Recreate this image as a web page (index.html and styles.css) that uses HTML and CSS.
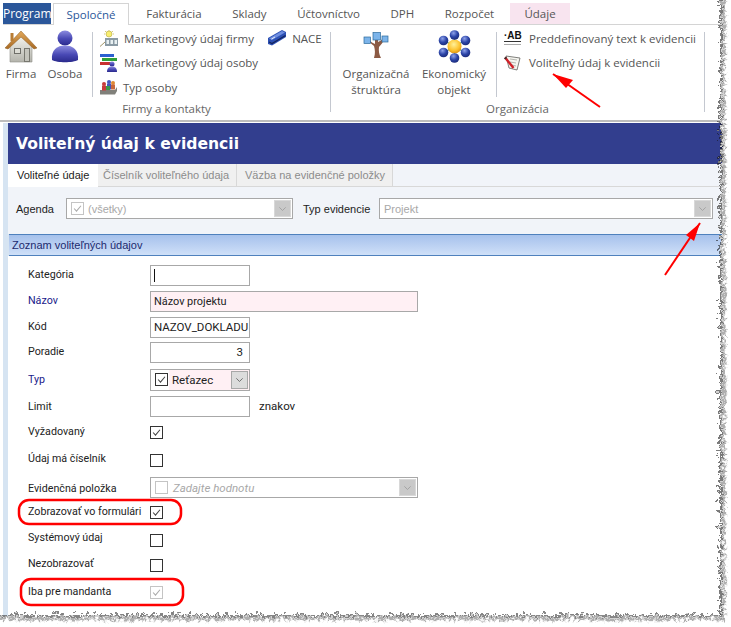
FILE: index.html
```html
<!DOCTYPE html>
<html lang="sk">
<head>
<meta charset="utf-8">
<title>Voliteľný údaj k evidencii</title>
<link rel="stylesheet" href="styles.css">
</head>
<body>
<svg class="defs" width="0" height="0" aria-hidden="true">
  <defs>
    <symbol id="tick" viewBox="0 0 13 13"><path d="M2.5 6.5 5.3 9.6 10.6 3.2" fill="none" stroke="currentColor" stroke-width="1.2"/></symbol>
    <symbol id="chev" viewBox="0 0 17 19"><path d="M4.5 8 8.5 12 12.5 8" fill="none" stroke="currentColor" stroke-width="1"/></symbol>
    <radialGradient id="sph" cx=".4" cy=".3" r=".8"><stop offset="0" stop-color="#8ea2ea"/><stop offset=".5" stop-color="#2c45a8"/><stop offset="1" stop-color="#16246e"/></radialGradient>
    <radialGradient id="gold" cx=".45" cy=".35" r=".7"><stop offset="0" stop-color="#fff19a"/><stop offset=".6" stop-color="#fdc32f"/><stop offset="1" stop-color="#d98a10"/></radialGradient>
    <linearGradient id="body" x1="0" y1="0" x2="0" y2="1"><stop offset="0" stop-color="#8c8ce0"/><stop offset=".55" stop-color="#4848b4"/><stop offset="1" stop-color="#2a2a8c"/></linearGradient>
    <linearGradient id="wall" x1="0" y1="0" x2="0" y2="1"><stop offset="0" stop-color="#f4f4ee"/><stop offset="1" stop-color="#b4b4ac"/></linearGradient>
    <linearGradient id="roof" x1="0" y1="0" x2="0" y2="1"><stop offset="0" stop-color="#e2a85a"/><stop offset="1" stop-color="#a86a24"/></linearGradient>
  </defs>
</svg>
<div class="page">
  <div class="app">
    <nav class="menu">
      <span class="tab program">Program</span>
      <span class="tab active">Spoločné</span>
      <span class="tab">Fakturácia</span>
      <span class="tab">Sklady</span>
      <span class="tab">Účtovníctvo</span>
      <span class="tab">DPH</span>
      <span class="tab">Rozpočet</span>
      <span class="tab context">Údaje</span>
    </nav>
    <div class="ribbon">
      <section class="group g-firmy">
        <div class="group-body">
          <div class="big b-firma">
            <svg class="big-icon" width="34" height="34" viewBox="0 0 34 34">
              <path d="M6 15 17 6 28 15V32H6Z" fill="url(#wall)" stroke="#8e8e86" stroke-width=".6"/>
              <path d="M1 18 17 1 33 18 30 19 17 7 4 19Z" fill="url(#roof)" stroke="#8c5a1e" stroke-width=".5"/>
              <rect x="6.500" y="3" width="3" height="8" fill="#b87c34"/>
              <rect x="10" y="18" width="7" height="6" fill="#6e6e68"/><rect x="11" y="19" width="5" height="4" fill="#dcdcd4"/>
              <rect x="20" y="18" width="6" height="14" fill="#77776f"/><rect x="21" y="19" width="4" height="12" fill="#c4c4bc"/>
            </svg>
            <span>Firma</span>
          </div>
          <div class="big b-osoba">
            <svg class="big-icon" width="28" height="34" viewBox="0 0 28 34">
              <circle cx="14" cy="8" r="7.500" fill="url(#body)"/>
              <path d="M1 30C0 20 6 15.500 14 15.500S28 20 27 30C22 33 6 33 1 30Z" fill="url(#body)"/>
            </svg>
            <span>Osoba</span>
          </div>
          <div class="sep"></div>
          <div class="small-col">
            <div class="small">
              <svg class="small-icon" width="18" height="17" viewBox="0 0 18 17">
                <circle cx="9" cy="4" r="3" fill="#f8ee70" stroke="#b4a640" stroke-width=".6"/>
                <path d="M9 0V1M4 4H5M13 4H14M5 1 6 2M13 1 12 2" stroke="#c4b640" stroke-width=".7"/>
                <rect x="5" y="8" width="13" height="8" fill="#8a9aa4"/>
                <path d="M6.500 10H9V14H6.500ZM10.500 10H13V14H10.500ZM14.500 10H17V14H14.500Z" fill="#e8f0f2"/>
                <path d="M0 16.500 5 12" stroke="#8a7a40" stroke-width=".8"/>
              </svg>
              <span>Marketingový údaj firmy</span>
            </div>
            <div class="small">
              <svg class="small-icon" width="18" height="18" viewBox="0 0 18 18">
                <rect x="0" y="0" width="14" height="3" fill="#2c60d0"/>
                <rect x="2" y="4" width="15" height="3" fill="#2ea03a"/>
                <rect x="0" y="8" width="13" height="3" fill="#c83030"/>
                <circle cx="12" cy="10" r="2.500" fill="url(#body)"/>
                <path d="M7 18C7 14 9 12.500 12 12.500S17 14 17 18Z" fill="url(#body)"/>
              </svg>
              <span>Marketingový údaj osoby</span>
            </div>
            <div class="small">
              <svg class="small-icon" width="17" height="16" viewBox="0 0 17 16">
                <path d="M0 11H15L17 8V12L15 15.500H0Z" fill="#80807a"/>
                <circle cx="4" cy="5" r="2" fill="#c83c3c"/><rect x="2" y="6.500" width="4" height="5" fill="#c83c3c"/>
                <circle cx="9" cy="3" r="2" fill="#4458c0"/><rect x="7" y="4.500" width="4" height="6" fill="#4458c0"/>
                <circle cx="13" cy="4" r="2" fill="#e08a34"/><rect x="11" y="5.500" width="4" height="5" fill="#c8683c"/>
                <rect x="6" y="7" width="4" height="4" fill="#3a9a4c"/>
              </svg>
              <span>Typ osoby</span>
            </div>
          </div>
          <div class="small nace">
            <svg class="small-icon" width="18" height="16" viewBox="0 0 18 16">
              <path d="M0 8 14 0 18 2 18 7 4 15.500 0 14Z" fill="#2c50b4"/>
              <path d="M1 8.500 14 1 17 2.500 4 10Z" fill="#6f8ee0"/>
              <path d="M1 12 4 13.500 17.500 5.500" fill="none" stroke="#14245c" stroke-width="1.200"/>
              <path d="M3.500 9 7 7" stroke="#e8ecf8" stroke-width="1"/>
            </svg>
            <span>NACE</span>
          </div>
        </div>
        <div class="group-label">Firmy a kontakty</div>
      </section>
      <section class="group g-org">
        <div class="group-body">
          <div class="big b-org">
            <svg class="big-icon" width="26" height="26" viewBox="0 0 26 26">
              <path d="M11 26C12.500 21 12 18 11 14 9 12 7 11 5 9L6 8C8 10 10 11 12 12L12 6H15L15 10C17 9 19 8 20 6L21.500 7C20 10 18 13 16 15 15.500 19 16 22 18 26Z" fill="#8c5a44"/>
              <rect x="1" y="5" width="6.500" height="6.500" fill="#7cb4ea" stroke="#2c6a9c" stroke-width=".7"/>
              <rect x="10" y="0.500" width="7.500" height="7.500" fill="#7cb4ea" stroke="#2c6a9c" stroke-width=".7"/>
              <rect x="19" y="4" width="6" height="6" fill="#7cb4ea" stroke="#2c6a9c" stroke-width=".7"/>
            </svg>
            <span>Organizačná<br>štruktúra</span>
          </div>
          <div class="big b-eko">
            <svg class="big-icon" width="33" height="33" viewBox="0 0 33 33">
              <path d="M16.500 16.500 16.500 5M16.500 16.500V28M16.500 16.500 6 10.500M16.500 16.500 27 10.500M16.500 16.500 6 22.500M16.500 16.500 27 22.500" stroke="#4c9c5c" stroke-width="1.200"/>
              <circle cx="16.500" cy="16.500" r="7" fill="url(#gold)"/>
              <circle cx="16.500" cy="5" r="4.800" fill="url(#sph)"/>
              <circle cx="16.500" cy="28" r="4.800" fill="url(#sph)"/>
              <circle cx="5.500" cy="10.500" r="4.800" fill="url(#sph)"/>
              <circle cx="27.500" cy="10.500" r="4.800" fill="url(#sph)"/>
              <circle cx="5.500" cy="22.500" r="4.800" fill="url(#sph)"/>
              <circle cx="27.500" cy="22.500" r="4.800" fill="url(#sph)"/>
            </svg>
            <span>Ekonomický<br>objekt</span>
          </div>
          <div class="sep"></div>
          <div class="small-col">
            <div class="small wide-gap">
              <span class="ab-icon"><span class="ab-text">·AB</span></span>
              <span>Preddefinovaný text k evidencii</span>
            </div>
            <div class="small wide-gap">
              <svg class="small-icon" width="17" height="17" viewBox="0 0 17 17">
                <path d="M2 2 16 4 13 16 5 14Z" fill="#f6f6f0" stroke="#60605c" stroke-width=".8"/>
                <path d="M6 5 13 6M6 8 12 9M8 11 12 12" stroke="#9a9a94" stroke-width=".7"/>
                <path d="M1 3.500 9.500 14" stroke="#d02028" stroke-width="2.400"/>
                <path d="M1 3.500 2 4.700" stroke="#303030" stroke-width="2.400"/>
              </svg>
              <span>Voliteľný údaj k evidencii</span>
            </div>
          </div>
        </div>
        <div class="group-label">Organizácia</div>
      </section>
    </div>
    <div class="rule"></div>
    <main class="window">
      <h1 class="title">Voliteľný údaj k evidencii</h1>
      <div class="subtabs">
        <span class="subtab on">Voliteľné údaje</span>
        <span class="subtab st2">Číselník voliteľného údaja</span>
        <span class="subtab st3">Väzba na evidenčné položky</span>
      </div>
      <div class="filter">
        <span class="filter-label">Agenda</span>
        <div class="combo agenda">
          <span class="box dim"><svg><use href="#tick"/></svg></span>
          <span class="ghost">(všetky)</span>
          <span class="drop"><svg><use href="#chev"/></svg></span>
        </div>
        <span class="filter-label typ">Typ evidencie</span>
        <div class="combo evid">
          <span class="ghost solo">Projekt</span>
          <span class="drop"><svg><use href="#chev"/></svg></span>
        </div>
      </div>
      <div class="bar">Zoznam voliteľných údajov</div>
      <form class="form">
        <label>Kategória</label>
        <div class="field short"><span class="caret"></span></div>
        <label class="req">Názov</label>
        <div class="field wide pink">Názov projektu</div>
        <label>Kód</label>
        <div class="field short">NAZOV_DOKLADU</div>
        <label>Poradie</label>
        <div class="field short num">3</div>
        <label class="req low">Typ</label>
        <div class="combo typ-combo">
          <span class="box-wrap"><span class="box"><svg><use href="#tick"/></svg></span></span>
          <span class="val">Reťazec</span>
          <span class="drop dark"><svg><use href="#chev"/></svg></span>
        </div>
        <label class="low">Limit</label>
        <div class="limit"><div class="field short"></div><span>znakov</span></div>
        <label>Vyžadovaný</label>
        <span class="box cb"><svg><use href="#tick"/></svg></span>
        <label class="high">Údaj má číselník</label>
        <span class="box cb"></span>
        <label class="lower">Evidenčná položka</label>
        <div class="combo ev-combo">
          <span class="box dim blank"></span>
          <span class="ghost it">Zadajte hodnotu</span>
          <span class="drop"><svg><use href="#chev"/></svg></span>
        </div>
        <label>Zobrazovať vo formulári</label>
        <span class="box cb"><svg><use href="#tick"/></svg></span>
        <label class="top">Systémový údaj</label>
        <span class="box cb"></span>
        <label class="high">Nezobrazovať</label>
        <span class="box cb"></span>
        <label>Iba pre mandanta</label>
        <span class="box cb dim"><svg><use href="#tick"/></svg></span>
      </form>
    </main>
  </div>
  <svg class="overlay" width="731" height="627" viewBox="0 0 731 627" aria-hidden="true">
    <defs>
      <filter id="torn" x="-5%" y="-5%" width="110%" height="110%">
        <feTurbulence type="turbulence" baseFrequency="0.2" numOctaves="2" seed="7" result="n"/>
        <feDisplacementMap in="SourceGraphic" in2="n" scale="10" xChannelSelector="R" yChannelSelector="G"/>
      </filter>
      <filter id="soft" x="-5%" y="-5%" width="110%" height="110%"><feGaussianBlur stdDeviation="1.100"/></filter>
    </defs>
    <g filter="url(#torn)">
      <path class="paper" d="M718 -20H760V650H-20V613H718Z"/>
      <path class="shade" d="M720 -20V615H-20" transform="translate(1 1)" filter="url(#soft)"/>
      <path class="cut" d="M718 -20V613H-20"/>
    </g>
    <path class="pen" d="M553 74 600 107"/>
    <path class="pen-head" d="M553 74 573 80 566 88Z"/>
    <path class="pen" d="M665 275 700 223"/>
    <path class="pen-head" d="M700 223 694 241 686 235Z"/>
    <rect class="ring" x="19" y="500" width="162" height="24" rx="10"/>
    <rect class="ring" x="21" y="579" width="162" height="26" rx="10"/>
  </svg>
</div>
</body>
</html>
```
FILE: styles.css
```css
* { box-sizing: border-box; }
html, body { margin: 0; padding: 0; background: #fff; }
.defs { position: absolute; }
.page { position: relative; width: 731px; height: 627px; overflow: hidden; background: #fff; }
.overlay { position: absolute; left: 0; top: 0; }
.paper { fill: #fff; }
.shade { fill: none; stroke: #777; stroke-width: 2; }
.cut { fill: none; stroke: #111; stroke-width: 1.1; }
.pen { stroke: #f00; stroke-width: 2; fill: none; }
.pen-head { fill: #f00; }
.ring { fill: none; stroke: #f00; stroke-width: 2.5; }
.app { width: 731px; height: 627px; padding: 3px 0 0 3px; display: flex; flex-direction: column; font-family: "Open Sans", sans-serif; font-size: 12px; color: #555; }

.menu { display: flex; height: 22px; border-bottom: 1px solid #d4d4d4; flex: none; }
.tab { padding: 0 15.25px; line-height: 21px; color: #555; font-size: 11.5px; white-space: nowrap; }
.tab.program { width: 48px; padding: 0; text-align: center; background: #2b579a; color: #fff; margin-right: 2px; height: 21px; font-size: 12px; }
.tab.active { width: 76px; padding: 0; text-align: center; height: 22px; border: 1px solid #d4d4d4; border-bottom: 0; background: #fff; color: #2b579a; position: relative; z-index: 1; margin-right: 2px; }
.tab.context { margin-left: 1px; padding: 0 14px; background: #f8e4ef; }

.ribbon { display: flex; height: 95px; flex: none; padding-top: 7px; }
.group { display: flex; flex-direction: column; border-right: 1px solid #c4c8d0; height: 80px; }
.g-firmy { width: 328px; }
.g-org { width: 374px; }
.group-body { display: flex; height: 65px; flex: none; }
.group-label { text-align: center; color: #666; font-size: 11.5px; line-height: 16px; margin-top: 4px; }
.sep { width: 1px; height: 65px; background: #c4c8d0; flex: none; }

.big { display: flex; flex-direction: column; align-items: center; text-align: center; line-height: 16px; font-size: 11.5px; flex: none; }
.big-icon { display: block; flex: none; }
.b-firma { width: 36px; margin-right: 6px; }
.b-firma .big-icon { margin-bottom: 2px; margin-top: -2px; }
.b-osoba { width: 40px; margin-right: 7px; }
.b-osoba .big-icon { margin-bottom: 2px; margin-top: -2px; }
.b-org { width: 84px; margin-left: 3px; }
.b-org .big-icon { margin-bottom: 8px; }
.b-eko { width: 72px; margin-right: 6px; }
.b-eko .big-icon { margin-top: -2px; margin-bottom: 3px; }

.small-col { display: flex; flex-direction: column; padding-left: 7px; margin-top: -6px; flex: none; }
.small { display: flex; align-items: center; height: 24.5px; white-space: nowrap; gap: 6px; font-size: 11.5px; flex: none; }
.small-icon { display: block; flex: none; }
.small.wide-gap { gap: 8px; }
.nace { margin-left: 10px; margin-top: -6px; }
.ab-icon { width: 17px; height: 16px; display: block; flex: none; background: linear-gradient(#333, #333) 0 11px / 100% 1px no-repeat, linear-gradient(#aaa, #aaa) 0 14px / 100% 1px no-repeat; }
.ab-text { display: block; font: bold 10px/11px "Liberation Sans", sans-serif; color: #111; text-align: right; }

.rule { height: 3px; flex: none; background: #bdbdbd; border-bottom: 1px solid #fff; margin-left: -3px; }
.window { flex: 1; padding-left: 5px; background: #d6e4f2; display: flex; flex-direction: column; min-height: 0; }
.title { margin: 0; height: 41px; flex: none; background: #323e8e; color: #fff; font: bold 15.6px/43px "DejaVu Sans", sans-serif; padding-left: 8px; }
.subtabs { display: flex; height: 23px; flex: none; background: #f1f4f9; border-bottom: 1px solid #d8d8d8; font: 11px/22px "Liberation Sans", sans-serif; }
.subtab { background: #f0f0f0; color: #8c8c8c; border-right: 1px solid #d8d8d8; height: 22px; white-space: nowrap; }
.subtab.on { width: 90px; padding-left: 9px; background: #fff; color: #222; border-right: 0; height: 23px; position: relative; }
.st2 { width: 139px; padding-left: 5px; }
.st3 { width: 156px; padding-left: 8px; }
.filter { display: flex; align-items: flex-start; height: 47px; flex: none; padding-top: 11px; background: #f1f4f9; font: 11px/23px "Liberation Sans", sans-serif; color: #222; }
.filter-label { width: 50px; padding-left: 8px; flex: none; }
.filter-label.typ { width: 86px; padding-left: 10px; }
.combo { display: flex; align-items: center; height: 21px; border: 1px solid #a8a8a8; background: #fff; position: relative; }
.agenda { width: 227px; margin-left: 8px; }
.evid { width: 334px; }
.ghost { color: #a8a8a8; flex: 1; padding-top: 1px; }
.ghost.solo { padding-left: 4px; }
.drop { width: 17px; height: 17px; flex: none; margin-right: 1px; background: #c9c9c9; border: 1px solid #d8d8d8; color: #999; display: block; }
.drop svg { width: 15px; height: 15px; display: block; }
.drop.dark { background: #dcdcdc; border-color: #a8a8a8; color: #555; height: 18px; }
.box { width: 13px; height: 13px; border: 1px solid #333; display: block; background: #fff; color: #444; flex: none; }
.box svg { width: 11px; height: 11px; display: block; }
.box.dim { border-color: #c4c4c4; color: #aaa; }
.agenda .box { margin: 0 4px; }
.bar { height: 22px; flex: none; border: 1px solid #4f81bd; border-width: 1px 0; background: linear-gradient(#a6c1ec, #cfe0f8); color: #1c2a6e; font: 11px/21px "Liberation Sans", sans-serif; padding-left: 3px; margin-left: 1px; }

.form { flex: 1; background: #fff; display: grid; grid-template-columns: 122px 1fr; grid-template-rows: 26px 26px 25px 27px 27px 26px 28px 27px 25px 28px 25px 27px 30px; align-items: start; padding: 9px 0 0 20px; font: 11.5px/15px Roboto, sans-serif; color: #222; }
.form label { padding-top: 2px; white-space: nowrap; font-size: 10.7px; }
.form label.req { color: #1a1a8a; }
.form label.low { padding-top: 3px; }
.form label.lower { padding-top: 4px; }
.form label.high { padding-top: 1px; }
.form label.top { padding-top: 0; }
.field { height: 21px; border: 1px solid #a8a8a8; background: #fff; line-height: 19px; padding: 0 3px; color: #222; white-space: nowrap; }
.short { width: 100px; }
.wide { width: 268px; }
.pink { background: #fff0f4; font-size: 10.9px; }
.num { text-align: right; padding-right: 6px; }
.caret { display: block; width: 1px; height: 13px; background: #111; margin-top: 3px; }
.limit { display: flex; gap: 9px; line-height: 21px; }
.typ-combo { width: 100px; height: 22px; background: #fff0f4; }
.box-wrap { background: #fff; height: 20px; width: 18px; padding: 3px 0 0 4px; flex: none; }
.val { flex: 1; padding-left: 3px; }
.ev-combo { width: 268px; }
.ev-combo .box { margin: 0 5px 0 4px; }
.it { font-style: italic; }
.cb { margin-top: 4px; }
```
